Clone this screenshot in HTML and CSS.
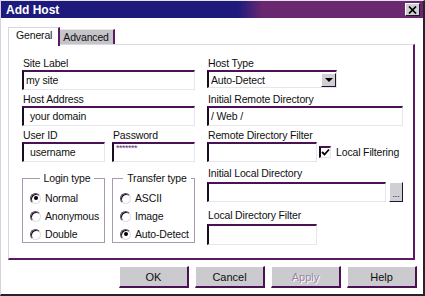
FILE: index.html
```html
<!DOCTYPE html>
<html lang="en">

<head>
    <meta charset="UTF-8">
    <title>Add Host</title>
    <link rel="stylesheet" href="styles.css">
</head>

<body>
    <div class="dialog">
        <div class="titlebar">
            <span class="title">Add Host</span>
            <span class="close">
                <svg width="9" height="8" viewBox="0 0 9 8">
                    <path d="M1 0.5 L8 7.5 M8 0.5 L1 7.5" stroke="#000" stroke-width="1.7" />
                </svg>
            </span>
        </div>
        <div class="body">
            <div class="tabs">
                <div class="tab active">General</div>
                <div class="tab">Advanced</div>
            </div>
            <div class="panel">
                <div class="field">
                    <label>Site Label</label>
                    <div class="input">my site</div>
                </div>
                <div class="field">
                    <label>Host Type</label>
                    <div class="select">
                        <span>Auto-Detect</span>
                        <span class="drop"></span>
                    </div>
                </div>

                <div class="field">
                    <label>Host Address</label>
                    <div class="input indent">your domain</div>
                </div>
                <div class="field">
                    <label>Initial Remote Directory</label>
                    <div class="input">/ Web /</div>
                </div>

                <div class="pair">
                    <div class="field">
                        <label>User ID</label>
                        <div class="input indent">username</div>
                    </div>
                    <div class="field">
                        <label>Password</label>
                        <div class="input password">*******</div>
                    </div>
                </div>
                <div class="field">
                    <label>Remote Directory Filter</label>
                    <div class="with-check">
                        <div class="input short"></div>
                        <span class="check">
                            <svg width="9" height="9" viewBox="0 0 9 9">
                                <path d="M1 4 L3.5 6.5 L8 1.5" fill="none" stroke="#000" stroke-width="1.8" />
                            </svg>
                        </span>
                        <span class="check-label">Local Filtering</span>
                    </div>
                </div>

                <div class="groups">
                    <fieldset class="group">
                        <legend>Login type</legend>
                        <div class="radio"><span class="dot on"></span>Normal</div>
                        <div class="radio"><span class="dot"></span>Anonymous</div>
                        <div class="radio"><span class="dot"></span>Double</div>
                    </fieldset>
                    <fieldset class="group">
                        <legend>Transfer type</legend>
                        <div class="radio"><span class="dot"></span>ASCII</div>
                        <div class="radio"><span class="dot"></span>Image</div>
                        <div class="radio"><span class="dot on"></span>Auto-Detect</div>
                    </fieldset>
                </div>
                <div class="local">
                    <div class="field">
                        <label>Initial Local Directory</label>
                        <div class="with-browse">
                            <div class="input wide"></div>
                            <span class="browse">...</span>
                        </div>
                    </div>
                    <div class="field">
                        <label>Local Directory Filter</label>
                        <div class="input short tall"></div>
                    </div>
                </div>
            </div>
            <div class="buttons">
                <button>OK</button>
                <button>Cancel</button>
                <button class="disabled">Apply</button>
                <button>Help</button>
            </div>
        </div>
    </div>
</body>

</html>
```

FILE: styles.css
```css
* {
    margin: 0;
    padding: 0;
    box-sizing: border-box;
    font-family: 'Liberation Sans', Arial, sans-serif;
}

body {
    background: #fff;
    width: 425px;
    height: 296px;
    overflow: hidden;
}

.dialog {
    width: 425px;
    height: 296px;
    background: #fff;
    border-top: 1px solid #e4e2ea;
    border-left: 1px solid #d4d2dc;
    border-right: 2px solid #2a2030;
    border-bottom: 2px solid #2a2030;
    font-size: 10.5px;
    letter-spacing: -0.15px;
    color: #101010;
    white-space: nowrap;
}

.titlebar {
    height: 17px;
    display: flex;
    align-items: center;
    justify-content: space-between;
    padding: 0 3px 0 5px;
    background: linear-gradient(90deg, #1c1a7c 0%, #1e1a7c 56%, #6a2870 62%, #6a2870 100%);
}

.title {
    color: #fff;
    font-weight: bold;
    font-size: 12px;
    letter-spacing: 0;
}

.close {
    width: 15px;
    height: 13px;
    background: #cfcfd4;
    border-top: 1px solid #fff;
    border-left: 1px solid #fff;
    border-right: 1px solid #2a1030;
    border-bottom: 1px solid #2a1030;
    display: flex;
    align-items: center;
    justify-content: center;
}

.body {
    padding: 9px 6px 0 7px;
}

.tabs {
    display: flex;
    align-items: flex-end;
    height: 17px;
}

.tab {
    height: 15px;
    padding: 0 4px 0 3px;
    line-height: 14px;
    background: #c6c4ca;
    border-top: 1px solid #e8e8ec;
    border-right: 2px solid #5a1a64;
}

.tab.active {
    height: 19px;
    margin-bottom: -2px;
    padding: 0 6px 0 7px;
    line-height: 15px;
    background: #fff;
    border-left: 1px solid #d8d6de;
    border-top: 1px solid #d8d6de;
    position: relative;
}

.panel {
    width: 407px;
    height: 216px;
    border-top: 1px solid #dcdae2;
    border-left: 1px solid #d8d6de;
    border-right: 2px solid #5a1a64;
    border-bottom: 2px solid #5a1a64;
    padding: 13px 0 0 13px;
    display: grid;
    grid-template-columns: 173px 196px;
    grid-template-rows: 32px 32px 32px auto;
    column-gap: 12px;
    row-gap: 4px;
}

.field label {
    display: block;
    height: 12px;
    line-height: 11px;
    padding-left: 1px;
}

.input {
    height: 20px;
    background: #fff;
    border-top: 2px solid #4a1254;
    border-left: 2px solid #1a0c1e;
    border-right: 1px solid #e6e4ec;
    border-bottom: 1px solid #e6e4ec;
    padding-left: 2px;
    line-height: 16px;
}

.input.indent {
    padding-left: 6px;
}

.input.password {
    font-size: 9px;
    line-height: 9px;
    color: #6a2a78;
    letter-spacing: -0.5px;
}

.input.short {
    width: 110px;
}

.input.wide {
    width: 180px;
}

.input.tall {
    height: 21px;
}

.select {
    width: 130px;
    height: 18px;
    display: flex;
    align-items: center;
    justify-content: space-between;
    border-top: 2px solid #4a1254;
    border-left: 2px solid #1a0c1e;
    border-right: 1px solid #e6e4ec;
    border-bottom: 1px solid #e6e4ec;
    padding-left: 2px;
}

.drop {
    width: 15px;
    height: 14px;
    background: #cfcfd4;
    border-top: 1px solid #fff;
    border-left: 1px solid #fff;
    border-right: 1px solid #2a1030;
    border-bottom: 1px solid #2a1030;
    display: flex;
    align-items: center;
    justify-content: center;
}

.drop::after {
    content: "";
    border-left: 4px solid transparent;
    border-right: 4px solid transparent;
    border-top: 4px solid #000;
}

.pair {
    display: flex;
    gap: 7px;
}

.pair .field {
    width: 83px;
}

.with-check {
    display: flex;
    align-items: center;
}

.check {
    width: 12px;
    height: 12px;
    margin-left: 2px;
    background: #fff;
    border-top: 2px solid #4a1254;
    border-left: 2px solid #1a0c1e;
    border-right: 1px solid #e6e4ec;
    border-bottom: 1px solid #e6e4ec;
    display: flex;
    align-items: center;
    justify-content: center;
}

.check-label {
    margin-left: 5px;
}

.groups {
    display: flex;
    gap: 7px;
    padding-top: 6px;
}

.group {
    width: 84px;
    height: 71px;
    border: 1px solid #a898b0;
    padding: 5px 0 0 7px;
}

.group legend {
    margin: 0 auto;
    padding: 0 4px;
    line-height: 12px;
}

.radio {
    display: flex;
    align-items: center;
    height: 18px;
    gap: 4px;
}

.dot {
    width: 11px;
    height: 11px;
    flex: none;
    border-radius: 50%;
    background: #fff;
    border: 1px solid;
    border-color: #5a4a62 #e0dee6 #e0dee6 #5a4a62;
    box-shadow: inset 1px 1px #1a0c1e;
    display: flex;
    align-items: center;
    justify-content: center;
}

.dot.on::after {
    content: "";
    width: 4px;
    height: 4px;
    border-radius: 50%;
    background: #000;
}

.local {
    display: flex;
    flex-direction: column;
    gap: 8px;
    padding-top: 2px;
}

.local label {
    height: 14px;
}

.with-browse {
    display: flex;
    gap: 3px;
}

.browse {
    width: 14px;
    height: 20px;
    background: #cfcfd4;
    border-top: 1px solid #fff;
    border-left: 1px solid #fff;
    border-right: 1px solid #2a1030;
    border-bottom: 1px solid #2a1030;
    text-align: center;
    line-height: 22px;
    font-size: 9px;
}

.buttons {
    display: flex;
    justify-content: flex-end;
    gap: 6px;
    margin-top: 6px;
}

button {
    width: 70px;
    height: 22px;
    background: #cbcacf;
    border-top: 1px solid #fff;
    border-left: 1px solid #fff;
    border-right: 2px solid #4a1254;
    border-bottom: 2px solid #4a1254;
    font-size: 11px;
    color: #101010;
}

button.disabled {
    color: #9a86a4;
    text-shadow: 1px 1px #fff;
}
```
